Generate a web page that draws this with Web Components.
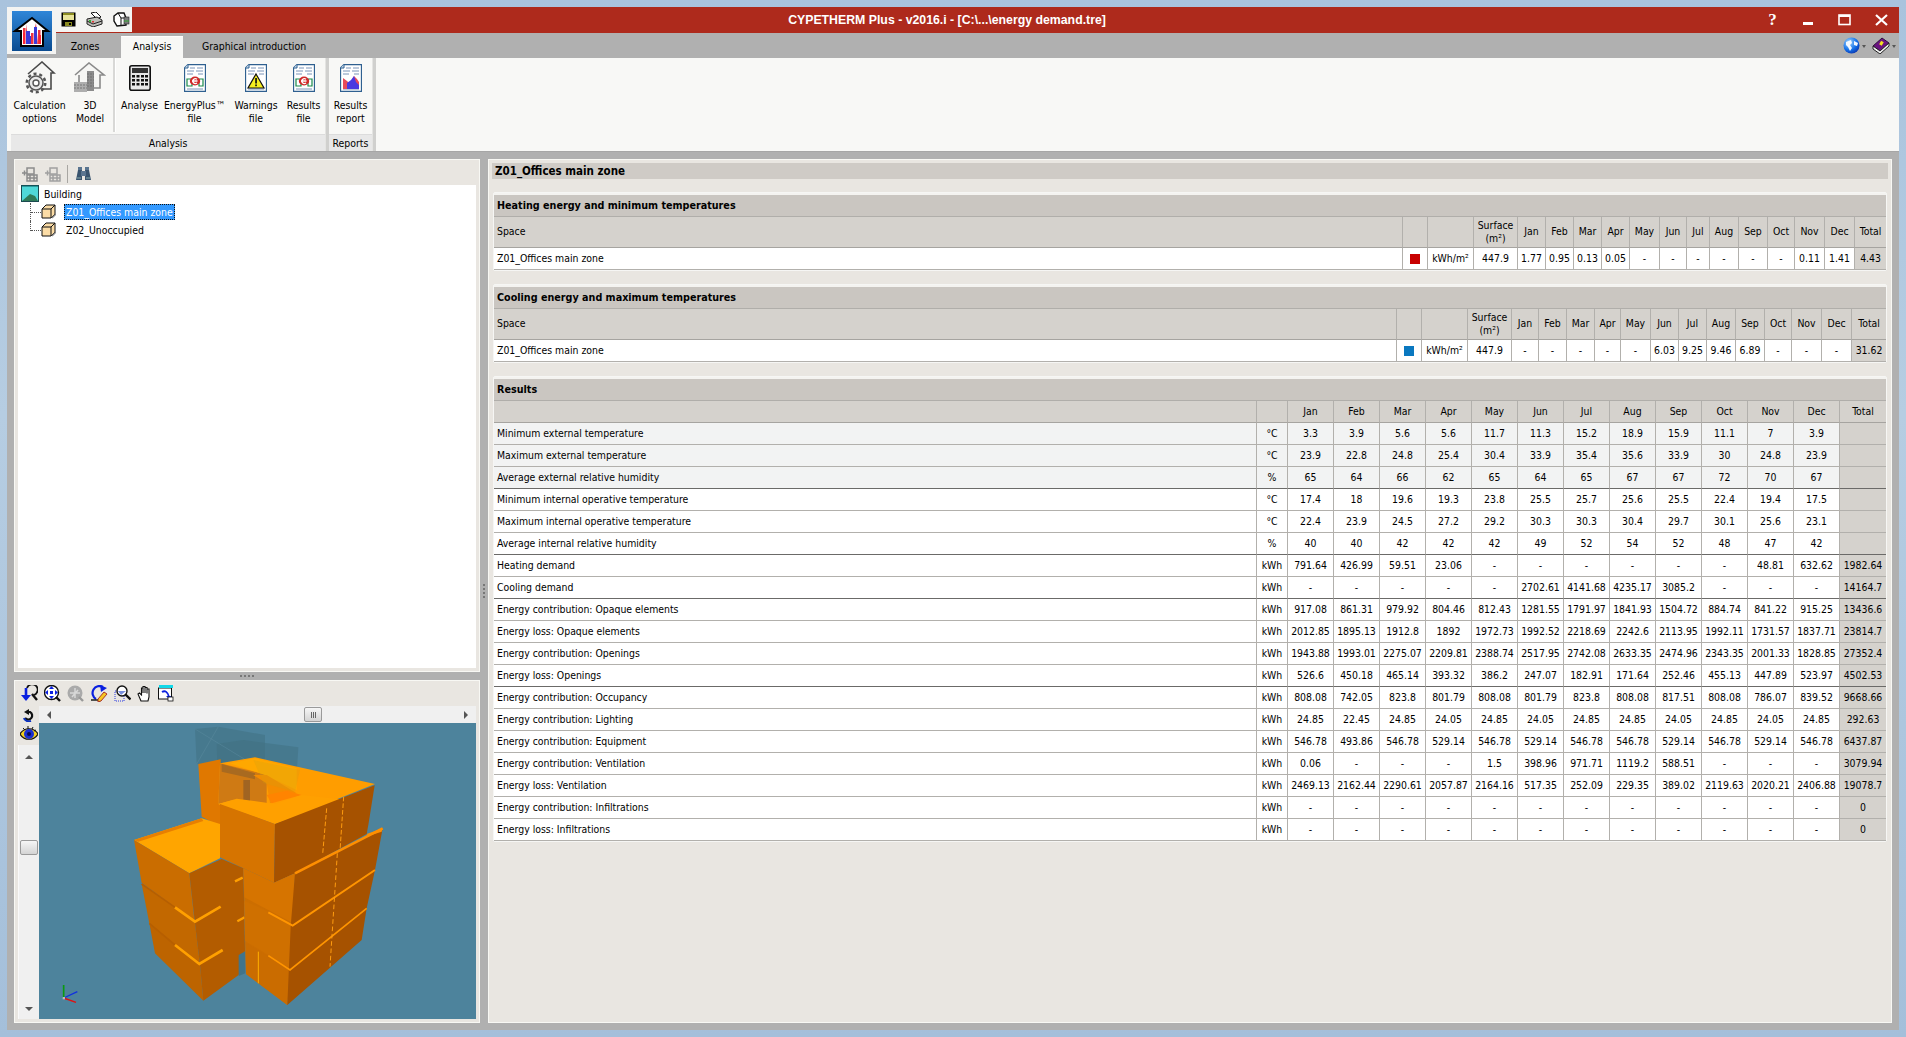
<!DOCTYPE html>
<html lang="en">
<head>
<meta charset="utf-8">
<title>CYPETHERM Plus</title>
<style>
  html, body { margin: 0; padding: 0; height: 100%; overflow: hidden; background: #a9c3dd; }
  body { font: 10.4px "DejaVu Sans Condensed", "Liberation Sans", Arial, sans-serif; color: #000; }
</style>
</head>
<body>
<cyp-app></cyp-app>

<script>
'use strict';

// ── icons ── every one is drawn at its real pixel size
const ICONS = {
  logo: [40, 40, `<defs><linearGradient id="lg" x1="0" y1="0" x2="0" y2="1"><stop offset="0" stop-color="#2f86d8"/><stop offset="1" stop-color="#0a4b90"/></linearGradient></defs>
    <rect width="40" height="40" fill="url(#lg)"/>
    <path d="M20 7 36 20H31V35H9V20H3Z" fill="#fff" stroke="#000" stroke-width="2"/>
    <path d="M11 17h2.5v16H11zM19 22h2.5v11H19zM26 19h2.5v14H26z" fill="#ee3340"/>
    <path d="M14 13 16 26 19 33H14ZM22 33V20L24 12 26 33Z" fill="#e83040" opacity=".9"/>
    <path d="M14 20h4v13h-4zM22 16h3v17h-3zM16 25h3v8h-3z" fill="#3a3ad8"/>
    <path d="M11 22h2v11h-2zM27 24h2v9h-2z" fill="#f23"/>`],
  save: [15, 15, `<rect x=".5" y=".5" width="14" height="14" fill="#000"/><rect x="2" y="1" width="11" height="7" fill="#e8e39a"/><rect x="2" y="1" width="11" height="2" fill="#8a8a20"/>
    <rect x="4" y="10" width="7" height="4" fill="#8a8a20"/><rect x="8" y="11" width="2" height="2" fill="#000"/>`],
  print: [17, 15, `<path d="M5 1 10 0 15 5 11 7Z" fill="#fff" stroke="#111"/><path d="M1 7 11 5 16 8V12L7 15 1 12Z" fill="#bdbdb8" stroke="#222"/>
    <path d="M1 9 7 12 16 9" fill="none" stroke="#222"/><rect x="3" y="8" width="2" height="2" fill="#3a3"/><rect x="6" y="9" width="2" height="1.5" fill="#d33"/>`],
  setup: [17, 15, `<path d="M1 4 5 1 11 1 13 6 13 13 4 14 1 9Z" fill="#fff" stroke="#111" stroke-width="1.4"/><path d="M5 1 8 6V14M8 6 13 6" fill="none" stroke="#111"/>
    <rect x="11" y="5" width="5" height="7" fill="#7c7c7c" stroke="#222" stroke-width=".6"/><path d="M11 9h5" stroke="#3a3"/>`],
  globe: [17, 17, `<defs><radialGradient id="gb" cx=".35" cy=".3" r=".8"><stop offset="0" stop-color="#9fd4ff"/><stop offset=".6" stop-color="#1470e8"/><stop offset="1" stop-color="#0a2fa8"/></radialGradient></defs>
    <circle cx="8.5" cy="8.5" r="8" fill="url(#gb)"/><path d="M3 5 8 3 9 6 7 8 9 11 7 14 5 10 3 8ZM11 4 15 6 14 9 11 8Z" fill="#f4f8ff"/>`],
  book: [18, 17, `<path d="M1 9 10 1 17 6 8 14Z" fill="#6a1580" stroke="#301040"/><path d="M1 9V12L8 17 17 9V6L8 14Z" fill="#f4f4f4" stroke="#222"/>
    <rect x="8" y="4" width="3" height="4" fill="#f4e020" transform="rotate(30 9 6)"/>`],
  calcOpts: [33, 33, `<path d="M5 13 19 1 31 12H28V28H18" fill="#f6f6f4" stroke="#4a4a4a" stroke-width="1.6"/>
    <circle cx="13" cy="22" r="7" fill="#e8e8e8" stroke="#555" stroke-width="1.5"/><circle cx="13" cy="22" r="9.2" fill="none" stroke="#555" stroke-width="2.6" stroke-dasharray="3 2.8"/>
    <circle cx="13" cy="22" r="3" fill="#fff" stroke="#555" stroke-width="1.4"/>`],
  model3d: [32, 32, `<path d="M1 13 15 1 30 13H26V26H20M5 13V20" fill="#f6f6f4" stroke="#8a8a8a" stroke-width="1.6"/>
    <path d="M13 9h7v20H13z" fill="#8c8c8c"/><path d="M0 20h13v10H0z" fill="#aeaeae"/>
    <path d="M13 12h7M13 15h7M13 18h7M13 21h7M13 24h7M0 23h13M0 26h13" stroke="#6a6a6a" stroke-width=".8" stroke-dasharray="2 1"/>`],
  calc: [22, 26, `<rect x=".8" y=".8" width="20.4" height="24.4" rx="2" fill="#e8e8e8" stroke="#111" stroke-width="1.6"/><rect x="3" y="3" width="16" height="5" fill="#333"/>
    <g fill="#111"><rect x="3" y="10" width="3" height="2.5"/><rect x="7.5" y="10" width="3" height="2.5"/><rect x="12" y="10" width="3" height="2.5"/><rect x="16" y="10" width="3" height="2.5"/>
    <rect x="3" y="14" width="3" height="2.5"/><rect x="7.5" y="14" width="3" height="2.5"/><rect x="12" y="14" width="3" height="2.5"/><rect x="16" y="14" width="3" height="2.5"/>
    <rect x="3" y="18" width="3" height="2.5"/><rect x="7.5" y="18" width="3" height="2.5"/><rect x="12" y="18" width="3" height="2.5"/><rect x="16" y="18" width="3" height="2.5"/></g>`],
  docE: [22, 28, docShell() + `<path d="M3 15h5v7H3zM15 15h4v7h-4z" fill="none" stroke="#1a8a4a" stroke-width="1.2"/>
    <ellipse cx="11" cy="17" rx="5.2" ry="4.4" fill="#d02a2a"/><path d="M8 17h5.5M13 15.2A2.6 2.4 0 1 0 13 19" fill="none" stroke="#fff" stroke-width="1.3"/>`],
  docWarn: [22, 28, docShell() + `<path d="M11 10 19 24H3Z" fill="#f6ee20" stroke="#111" stroke-width="1.2"/><rect x="10.2" y="14" width="1.7" height="5.5" fill="#111"/><rect x="10.2" y="20.5" width="1.7" height="1.7" fill="#111"/>`],
  docReport: [22, 28, docShell() + `<path d="M3 14 7 17 10 20 14 12 17 15 19 18V25H3Z" fill="#e84a5a"/><path d="M7 25V19L11 16 14 12 16 18 19 21V25Z" fill="#4a3ae0"/>`],
  treeAdd: [17, 15, treeTool('#8c8c8c')],
  treeDel: [17, 15, treeTool('#a0a0a0')],
  binoc: [17, 14, `<path d="M1 13 3 3H7V13ZM10 13V3H14L16 13Z" fill="#39546e"/><rect x="6" y="4" width="5" height="5" fill="#5a7590"/><rect x="3" y="0" width="4" height="3" fill="#5a7590"/><rect x="10" y="0" width="4" height="3" fill="#5a7590"/><path d="M2 11h4M11 11h4" stroke="#8aa" />`],
  building: [18, 17, `<rect x=".5" y=".5" width="17" height="16" fill="#4fd8d8" stroke="#1a4a50"/><path d="M1 16 9 9 14 11 17 16Z" fill="#2f7a58"/><path d="M1 1h16" stroke="#0a5a60"/>`],
  zone: [15, 15, `<path d="M1 5 5 1H14V10L10 14H1Z" fill="#fbdca6" stroke="#111"/><path d="M1 5H10V14M10 5 14 1" fill="none" stroke="#111"/><path d="M11 14 15 10" stroke="#888" stroke-width="1.5"/>`],
  vRot: [17, 17, `<path d="M6 3A5.5 5.5 0 1 1 13 10" fill="none" stroke="#111" stroke-width="1.8"/><path d="M5 3V12" stroke="#0a20e0" stroke-width="2.6"/><path d="M0 10H10L5 16Z" fill="#0a20e0"/><path d="M11 9 16 15" stroke="#111" stroke-width="2.4"/>`],
  vFit: [17, 17, `<circle cx="7.5" cy="7.5" r="7" fill="#fff" stroke="#111" stroke-width="1.4"/><path d="M7.5 1 10 4H5ZM7.5 14 5 11H10ZM1 7.5 4 5V10ZM14 7.5 11 10V5Z" fill="#0a20e0"/><rect x="6" y="6" width="3" height="3" fill="#0a20e0"/><path d="M12 12 16 16" stroke="#111" stroke-width="2.4"/>`],
  vOff: [17, 17, `<circle cx="8" cy="8" r="7.5" fill="#aaaaaa"/><path d="M8 3V13M3 8H13M5 12 11 5" stroke="#d8d8d8" stroke-width="1.5" fill="none"/><path d="M12 12 16 16" stroke="#999" stroke-width="2.4"/>`],
  vRedraw: [18, 17, `<path d="M13 2A6.5 6.5 0 1 0 6 14" fill="none" stroke="#0a20e0" stroke-width="2.2"/><path d="M10 0 17 3 11 7Z" fill="#0a20e0"/><path d="M1 15H9" stroke="#111" stroke-width="1.4"/><path d="M8 14 14 7 17 9 11 16 8 17Z" fill="#f6c820" stroke="#a02020" stroke-width=".9"/>`],
  vZoom: [17, 17, `<path d="M1 6h9v10H1z" fill="none" stroke="#2a3ae0" stroke-dasharray="1 1"/><circle cx="8" cy="6" r="5" fill="#fff" stroke="#111" stroke-width="1.4"/><path d="M4 6h8L7 10Z" fill="#4060d0" opacity=".7"/><path d="M11.5 9.5 16.5 14.5" stroke="#111" stroke-width="2.4"/>`],
  vHand: [15, 17, `<path d="M4 16 1 9 2.5 8 4.5 10V3H6V8V1.5H8V8V2.5H10V8.5V4H12V12L11 16Z" fill="#fff" stroke="#111" stroke-width="1.1"/>`],
  vWin: [16, 17, `<rect x=".5" y="3" width="13" height="11" fill="#fff" stroke="#111"/><rect x="1" y="0" width="14" height="3" fill="#12d8e8"/><path d="M4 7C7 5 10 7 11 12" fill="none" stroke="#0a20e0" stroke-width="1.8"/><path d="M8 11h5l-1 4Z" fill="#0a20e0"/><rect x="10" y="12" width="5" height="4" fill="#fff" stroke="#111" stroke-width=".8"/>`],
  vUndo: [14, 13, `<path d="M6 3H8A4 4 0 1 1 3 9" fill="none" stroke="#111" stroke-width="2.2"/><path d="M2 3 7 0V6Z" fill="#111"/><path d="M2 9A5 4 0 0 0 9 12" fill="none" stroke="#0a30c0" stroke-width="2"/>`],
  vEye: [18, 16, `<path d="M0 8C4 1 14 1 18 8 14 15 4 15 0 8Z" fill="#f4d020" stroke="#111" stroke-width="1.2"/><ellipse cx="9" cy="8" rx="5" ry="5" fill="#1a30d0"/><circle cx="9" cy="8" r="2" fill="#0a0a50"/><path d="M3 2 5 4M8 0V3M13 1 12 3M16 4 14 5" stroke="#111"/>`],
};

function docShell() {
  return `<path d="M4 .5H21.5V27.5H.5V4Z" fill="#fff" stroke="#2f6090" stroke-width="1.3"/><path d="M.5 4H4V.5" fill="#cfe0f0" stroke="#2f6090"/>
    <path d="M6 4h5M13 4h6M3 7h7M12 7h7M3 10h6M14 10h5M3 25h16" stroke="#7a94b8" stroke-width="1"/>`;
}
function treeTool(c) {
  return `<g fill="none" stroke="${c}" stroke-width="1.5"><path d="M1 6H6M3.5 3.5V8.5"/><rect x="6" y="1" width="7" height="6"/><rect x="6" y="8" width="10" height="6"/><path d="M9 8v6M13 8v6M6 11h10"/></g>`;
}

class CypIcon extends HTMLElement {
  connectedCallback() {
    const [w, h, body] = ICONS[this.getAttribute('name')];
    this.attachShadow({ mode: 'open' }).innerHTML =
      `<style>:host{display:inline-flex;flex:none;line-height:0}</style>
       <svg xmlns="http://www.w3.org/2000/svg" width="${w}" height="${h}" viewBox="0 0 ${w} ${h}">${body}</svg>`;
  }
}
customElements.define('cyp-icon', CypIcon);

// ── title bar with the application button lying over the tabs ──
class CypTitlebar extends HTMLElement {
  constructor() {
    super();
    this.attachShadow({ mode: 'open' }).innerHTML = `
      <style>
        :host { display: flex; position: relative; height: 26px; background: #ae2a1c; color: #fff; align-items: center; }
        .logo { position: absolute; left: 0; top: 0; width: 49px; height: 47px; background: #f4f4f2; box-sizing: border-box; padding: 4px 5px; z-index: 2; }
        .quick { margin-left: 49px; width: 76px; height: 25px; align-self: flex-start; background: #f4f4f2; display: flex; align-items: center; padding-left: 5px; gap: 10px; box-sizing: border-box; }
        .title { flex: 1; text-align: center; font: bold 12.3px "Liberation Sans", Arial, sans-serif; padding-left: 6px; }
        .ctl { display: flex; align-items: center; height: 26px; margin-right: -1px; }
        .ctl span { width: 37px; display: flex; justify-content: center; align-items: center; }
        .ctl .q { font: bold 17px "Liberation Serif", serif; width: 33px; }
      </style>
      <div class="logo"><cyp-icon name="logo"></cyp-icon></div>
      <div class="quick"><cyp-icon name="save"></cyp-icon><cyp-icon name="print"></cyp-icon><cyp-icon name="setup"></cyp-icon></div>
      <div class="title"><slot></slot></div>
      <div class="ctl">
        <span class="q">?</span>
        <span><svg width="12" height="12"><rect x="1" y="8" width="10" height="3" fill="#fff"/></svg></span>
        <span><svg width="13" height="12"><rect x="1" y="1" width="11" height="9.5" fill="none" stroke="#fff" stroke-width="1.6"/><rect x="1" y="1" width="11" height="2" fill="#fff"/></svg></span>
        <span><svg width="13" height="12"><path d="M1 1 12 11M12 1 1 11" stroke="#fff" stroke-width="2.2"/></svg></span>
      </div>`;
  }
}
customElements.define('cyp-titlebar', CypTitlebar);

class CypTabs extends HTMLElement {
  constructor() {
    super();
    this.attachShadow({ mode: 'open' }).innerHTML = `
      <style>
        :host { display: flex; height: 25px; background: #b0b0b0; padding-left: 42px; align-items: flex-end; }
        .tab { height: 22px; display: flex; align-items: center; justify-content: center; padding-bottom: 2px; box-sizing: border-box; }
        .on { background: #f8f8f6; box-shadow: inset 0 1px 0 #fff; }
        .end { margin-left: auto; display: flex; gap: 6px; align-self: center; padding-right: 3px; }
        .drop { position: relative; padding-right: 6px; display: inline-flex; align-items: center; }
        .drop::after { content: ""; border: 2.5px solid transparent; border-top: 3px solid #555; position: absolute; right: 0; top: 8px; }
      </style>
      <div class="tab" style="width:72px">Zones</div>
      <div class="tab on" style="width:62px">Analysis</div>
      <div class="tab" style="width:142px">Graphical introduction</div>
      <div class="end">
        <span class="drop"><cyp-icon name="globe"></cyp-icon></span>
        <span class="drop"><cyp-icon name="book"></cyp-icon></span>
      </div>`;
  }
}
customElements.define('cyp-tabs', CypTabs);

class CypRibbonButton extends HTMLElement {
  constructor() {
    super();
    this.attachShadow({ mode: 'open' }).innerHTML = `
      <style>
        :host { display: flex; flex-direction: column; align-items: center; padding-top: 3px; text-align: center; line-height: 13px; box-sizing: border-box; white-space: nowrap; flex: none; }
        .ico { height: 36px; margin-bottom: 2px; display: flex; align-items: center; justify-content: center; }
      </style>
      <div class="ico"><span id="i"></span></div>
      <div><slot></slot></div>`;
  }
  connectedCallback() {
    this.style.width = this.getAttribute('w') + 'px';
    this.shadowRoot.getElementById('i').innerHTML = `<cyp-icon name="${this.getAttribute('icon')}"></cyp-icon>`;
  }
}
customElements.define('cyp-ribbon-button', CypRibbonButton);

class CypRibbonGroup extends HTMLElement {
  constructor() {
    super();
    this.attachShadow({ mode: 'open' }).innerHTML = `
      <style>
        :host { display: flex; flex-direction: column; height: 93px; flex: none; }
        .btns { display: flex; height: 76px; flex: none; }
        .lab { height: 17px; background: #e8e8e8; border-top: 1px solid #dcdcdc; box-sizing: border-box; text-align: center; line-height: 16px; }
      </style>
      <div class="btns"><slot></slot></div>
      <div class="lab" id="l"></div>`;
  }
  connectedCallback() {
    this.shadowRoot.getElementById('l').textContent = this.getAttribute('label');
  }
}
customElements.define('cyp-ribbon-group', CypRibbonGroup);

class CypRibbon extends HTMLElement {
  constructor() {
    super();
    this.attachShadow({ mode: 'open' }).innerHTML = `
      <style>
        :host { display: flex; height: 94px; background: #f8f8f6; padding-left: 4px; box-sizing: border-box; border-bottom: 1px solid #a6a6a6; }
      </style>
      <slot></slot>`;
  }
}
customElements.define('cyp-ribbon', CypRibbon);

class CypTreeItem extends HTMLElement {
  constructor() {
    super();
    this.attachShadow({ mode: 'open' }).innerHTML = `
      <style>
        :host { display: flex; align-items: center; height: 18px; white-space: nowrap; }
        :host([root]) { padding-left: 3px; }
        .elbow { width: 11px; margin-left: 12px; height: 100%; box-sizing: border-box; border-left: 1px dotted #555; flex: none; }
        .elbow::after { content: ""; display: block; height: 9px; border-bottom: 1px dotted #555; }
        :host([last]) .elbow { height: 10px; align-self: flex-start; }
        .txt { padding: 1px 2px; margin-left: 8px; line-height: 14px; }
        :host([root]) .txt { margin-left: 3px; }
        :host([selected]) .txt { background: #3399ff; color: #fff; outline: 1px dotted #111; outline-offset: -1px; padding: 1px 2px; }
      </style>
      <span id="e"></span><span id="i"></span><span class="txt"><slot></slot></span>`;
  }
  connectedCallback() {
    if (!this.hasAttribute('root')) this.shadowRoot.getElementById('e').className = 'elbow';
    this.shadowRoot.getElementById('e').style.display = this.hasAttribute('root') ? 'none' : 'block';
    this.shadowRoot.getElementById('i').innerHTML = `<cyp-icon name="${this.getAttribute('icon')}"></cyp-icon>`;
  }
}
customElements.define('cyp-tree-item', CypTreeItem);

class CypTreePanel extends HTMLElement {
  constructor() {
    super();
    this.attachShadow({ mode: 'open' }).innerHTML = `
      <style>
        :host { display: flex; flex-direction: column; background: #e9e6e1; border: 1px solid #f8f8f4; padding: 3px; box-sizing: border-box; height: 513px; }
        .bar { height: 22px; flex: none; display: flex; align-items: center; padding-left: 3px; gap: 6px; }
        .sep { width: 1px; height: 18px; background: #a8a6a2; margin: 0 1px 0 0; }
        .tree { flex: 1; background: #fff; }
      </style>
      <div class="bar">
        <cyp-icon name="treeAdd"></cyp-icon><cyp-icon name="treeDel"></cyp-icon><span class="sep"></span><cyp-icon name="binoc"></cyp-icon>
      </div>
      <div class="tree"><slot></slot></div>`;
  }
}
customElements.define('cyp-tree-panel', CypTreePanel);

// ── 3D viewer: the model is drawn in one svg, with the reference's proportions ──
const MODEL = `
<svg xmlns="http://www.w3.org/2000/svg" width="437" height="296" viewBox="117 189 1311 888" style="display:block">
  <rect x="117" y="189" width="1311" height="888" fill="#4d839c"/>
  <!-- glass boxes at the back -->
  <path d="M585 207 655 200 795 225V335L590 312Z" fill="#3f6f80" opacity=".5"/>
  <path d="M650 252 730 240 895 262 887 395 790 440 655 420Z" fill="#3f6f80" opacity=".5"/>
  <path d="M585 207 795 335M655 200 590 312" stroke="#5b8a9e" stroke-width="1.5"/>
  <!-- back tower -->
  <path d="M595 312 662 298 662 500 605 470Z" fill="#e07800"/>
  <path d="M660 310 765 292 1125 372 825 492 655 432Z" fill="#ff9d00"/>
  <path d="M660 310 765 335 800 345 800 440 700 420 655 432Z" fill="#cf7a14"/>
  <path d="M730 360H750V430H730Z" fill="#a06422"/>
  <path d="M665 312 765 340V358L665 335Z" fill="#a86a20"/>
  <path d="M690 310 765 295 890 325 890 390 795 345Z" fill="#ffa800"/>
  <path d="M760 345 800 345 890 400 810 430 800 370Z" fill="#f58c00"/>
  <path d="M815 430 905 405 860 392 800 405Z" fill="#ff8400"/>
  <path d="M760 300 900 330 885 395 790 370Z" fill="#caa012" opacity=".25"/>
  <!-- upper block -->
  <path d="M655 432 710 416 825 432 905 405 1040 420 825 492Z" fill="#ffa000"/>
  <path d="M660 432 825 492 822 668 660 592Z" fill="#d67400"/>
  <path d="M825 492 1124 376 1105 495 1100 522 885 640 822 668Z" fill="#a65200"/>
  <path d="M980 445 968 582M1031 410 1020 572" stroke="#ff9c10" stroke-width="3" stroke-dasharray="14 6"/>
  <!-- left low block -->
  <path d="M402 540 605 475 660 492V595L568 640Z" fill="#ffa500"/>
  <path d="M402 540 605 475 610 483 415 545Z" fill="#e87f00"/>
  <path d="M402 540 568 640 584 790 525 742 425 668Z" fill="#ca6d00"/>
  <path d="M425 672 525 742 585 790 600 915 525 855 448 790Z" fill="#c26800"/>
  <path d="M448 790 525 855 600 915 610 1022 465 880Z" fill="#bd6400"/>
  <path d="M568 640 665 597 730 625 735 872 716 945 610 1022 600 915 585 790Z" fill="#b35c00"/>
  <path d="M425 672 525 742M448 790 525 855" stroke="#b75f00" stroke-width="5"/>
  <path d="M525 742 585 785 662 740M525 855 598 912 668 870" fill="none" stroke="#ffa000" stroke-width="8"/>
  <path d="M705 664 728 653M712 784 734 772" stroke="#ff9f00" stroke-width="7"/>
  <path d="M716 885 736 874V940L716 948Z" fill="#41748a"/>
  <!-- big right block -->
  <path d="M730 625 822 668 885 640 872 800 862 1035 738 942Z" fill="#cc6e00"/>
  <path d="M730 625 822 668 885 640 880 790 805 750 733 712Z" fill="#d67400"/>
  <path d="M733 722 805 755 876 797 872 928 805 885 735 842Z" fill="#cf7000"/>
  <path d="M736 846 805 888 870 932 862 1035 738 942Z" fill="#ca6c00"/>
  <path d="M885 640 1148 505 1125 630 1100 745 1085 840 862 1035 872 800Z" fill="#a65200"/>
  <path d="M1100 522 1148 505 1145 515 1105 528Z" fill="#ff8f00"/>
  <path d="M885 640 1148 505" stroke="#ff8f00" stroke-width="8"/>
  <path d="M805 757 878 797 1125 630" fill="none" stroke="#ff9500" stroke-width="6"/>
  <path d="M805 887 870 930 1100 745" fill="none" stroke="#ff9500" stroke-width="5"/>
  <path d="M1012 580 990 920" stroke="#ff9c10" stroke-width="3" stroke-dasharray="14 8"/>
  <path d="M775 875V970" stroke="#ffb000" stroke-width="3"/>
  <!-- axes -->
  <path d="M191 1014V975" stroke="#0a9a10" stroke-width="5"/><path d="M191 1014 232 995" stroke="#1030e0" stroke-width="4"/><path d="M191 1014 228 1027" stroke="#e01010" stroke-width="4"/>
  <rect x="188" y="1011" width="7" height="7" fill="#bbb"/>
</svg>`;

class CypViewer extends HTMLElement {
  constructor() {
    super();
    this.attachShadow({ mode: 'open' }).innerHTML = `
      <style>
        :host { display: grid; grid-template-columns: 21px 437px; grid-template-rows: 25px 17px 296px; background: #e9e6e1; border: 1px solid #f8f8f4; padding: 0 3px 3px; box-sizing: border-box; height: 343px; }
        .bar { grid-column: 1 / 3; display: flex; align-items: center; padding: 0 0 0 3px; gap: 6px; }
        .side { grid-row: 2 / 4; display: flex; flex-direction: column; }
        .tools { height: 39px; flex: none; display: flex; flex-direction: column; align-items: center; gap: 4px; padding-top: 3px; box-sizing: border-box; }
        .vs { flex: 1; background: #f0f0f0; border-left: 1px solid #fafafa; display: flex; flex-direction: column; align-items: center; }
        .hs { background: #f0f0f0; display: flex; align-items: center; }
        .t { width: 0; height: 0; border: 4px solid transparent; flex: none; }
        .up { border-bottom: 4px solid #555; margin-top: 6px; }
        .dn { border-top: 4px solid #555; margin-bottom: 4px; }
        .lf { border-right: 4px solid #555; margin-left: 4px; }
        .rt { border-left: 4px solid #555; margin-right: 4px; }
        .thumb { background: linear-gradient(#f6f6f6, #d4d4d4); border: 1px solid #9a9a9a; border-radius: 2px; box-sizing: border-box; flex: none; }
        .hthumb { width: 18px; height: 15px; display: flex; align-items: center; justify-content: center; gap: 1px; }
        .hthumb i { width: 1px; height: 6px; background: #666; }
        .vthumb { width: 18px; height: 15px; }
        .grow { flex: 1; }
      </style>
      <div class="bar">
        <cyp-icon name="vRot"></cyp-icon><cyp-icon name="vFit"></cyp-icon><cyp-icon name="vOff"></cyp-icon><cyp-icon name="vRedraw"></cyp-icon><cyp-icon name="vZoom"></cyp-icon><cyp-icon name="vHand"></cyp-icon><cyp-icon name="vWin"></cyp-icon>
      </div>
      <div class="side">
        <div class="tools"><cyp-icon name="vUndo"></cyp-icon><cyp-icon name="vEye"></cyp-icon></div>
        <div class="vs">
          <span class="t up"></span><span style="height:81px"></span>
          <div class="thumb vthumb"></div>
          <span class="grow"></span><span class="t dn"></span>
        </div>
      </div>
      <div class="hs">
        <span class="t lf"></span><span style="width:253px"></span>
        <div class="thumb hthumb"><i></i><i></i><i></i></div>
        <span class="grow"></span><span class="t rt"></span>
      </div>
      <div>${MODEL}</div>`;
  }
}
customElements.define('cyp-viewer', CypViewer);

// ── grid of values: columns by boundary, rows by data ──
class CypTable extends HTMLElement {
  constructor() {
    super();
    this.attachShadow({ mode: 'open' }).innerHTML = `
      <style>
        :host { display: block; }
        table { border-collapse: separate; border-spacing: 0; table-layout: fixed; width: 1392px; }
        td { padding: 0 0 1px; height: 22px; box-sizing: border-box; text-align: center; white-space: nowrap; overflow: hidden; border-right: 1px solid #b2b0ac; border-bottom: 1px solid #b2b0ac; background: #fff; line-height: 13px; }
        td:first-child { text-align: left; padding-left: 3px; }
        td:last-child { border-right: 0; background: #d5d2cd; }
        tr.grey td:not(:last-child) { background: #f2f3f3; }
        tr.head td { background: #d5d2cd; border-bottom-color: #a6a4a0; }
        tr.title td { background: #cac6c1; font-weight: bold; font-size: 10.7px; border-right: 0; border-bottom-color: #b0aeaa; padding-left: 3px; text-align: left; }
        tr.brk td { border-bottom-color: #6b6a68; }
        .sw { display: inline-block; width: 10px; height: 10px; vertical-align: middle; }
      </style>
      <table></table>`;
  }
  set data({ title, bounds, head, headH, rows }) {
    const cols = bounds.slice(1).map((b, i) => `<col style="width:${b - bounds[i]}px">`).join('');
    const cell = v => v && v.swatch ? `<span class="sw" style="background:${v.swatch}"></span>` : v;
    let html = `<colgroup>${cols}</colgroup>`;
    html += `<tr class="title"><td colspan="${bounds.length - 1}">${title}</td></tr>`;
    html += `<tr class="head"><td style="height:${headH}px">${head.join('</td><td>')}</td></tr>`;
    for (const r of rows) {
      html += `<tr class="${r.cls || ''}">${r.cells.map(v => `<td>${cell(v)}</td>`).join('')}</tr>`;
    }
    this.shadowRoot.querySelector('table').innerHTML = html;
  }
}
customElements.define('cyp-table', CypTable);

class CypCard extends HTMLElement {
  constructor() {
    super();
    this.attachShadow({ mode: 'open' }).innerHTML = `
      <style>
        :host { display: block; border: 1px solid #f6f6f4; border-radius: 2px; padding-top: 2px; margin: 0 1px 13px; background: #f4f3f0; }
      </style>
      <slot></slot>`;
  }
}
customElements.define('cyp-card', CypCard);

const MONTHS = ['Jan', 'Feb', 'Mar', 'Apr', 'May', 'Jun', 'Jul', 'Aug', 'Sep', 'Oct', 'Nov', 'Dec'];
const line = s => s.split(' ');
const RESULTS = [
  ['Minimum external temperature', '°C', '3.3 3.9 5.6 5.6 11.7 11.3 15.2 18.9 15.9 11.1 7 3.9', '', 'grey'],
  ['Maximum external temperature', '°C', '23.9 22.8 24.8 25.4 30.4 33.9 35.4 35.6 33.9 30 24.8 23.9', '', 'grey'],
  ['Average external relative humidity', '%', '65 64 66 62 65 64 65 67 67 72 70 67', '', 'grey brk'],
  ['Minimum internal operative temperature', '°C', '17.4 18 19.6 19.3 23.8 25.5 25.7 25.6 25.5 22.4 19.4 17.5', ''],
  ['Maximum internal operative temperature', '°C', '22.4 23.9 24.5 27.2 29.2 30.3 30.3 30.4 29.7 30.1 25.6 23.1', ''],
  ['Average internal relative humidity', '%', '40 40 42 42 42 49 52 54 52 48 47 42', '', 'brk'],
  ['Heating demand', 'kWh', '791.64 426.99 59.51 23.06 - - - - - - 48.81 632.62', '1982.64'],
  ['Cooling demand', 'kWh', '- - - - - 2702.61 4141.68 4235.17 3085.2 - - -', '14164.7', 'brk'],
  ['Energy contribution: Opaque elements', 'kWh', '917.08 861.31 979.92 804.46 812.43 1281.55 1791.97 1841.93 1504.72 884.74 841.22 915.25', '13436.6'],
  ['Energy loss: Opaque elements', 'kWh', '2012.85 1895.13 1912.8 1892 1972.73 1992.52 2218.69 2242.6 2113.95 1992.11 1731.57 1837.71', '23814.7'],
  ['Energy contribution: Openings', 'kWh', '1943.88 1993.01 2275.07 2209.81 2388.74 2517.95 2742.08 2633.35 2474.96 2343.35 2001.33 1828.85', '27352.4'],
  ['Energy loss: Openings', 'kWh', '526.6 450.18 465.14 393.32 386.2 247.07 182.91 171.64 252.46 455.13 447.89 523.97', '4502.53', 'brk'],
  ['Energy contribution: Occupancy', 'kWh', '808.08 742.05 823.8 801.79 808.08 801.79 823.8 808.08 817.51 808.08 786.07 839.52', '9668.66'],
  ['Energy contribution: Lighting', 'kWh', '24.85 22.45 24.85 24.05 24.85 24.05 24.85 24.85 24.05 24.85 24.05 24.85', '292.63'],
  ['Energy contribution: Equipment', 'kWh', '546.78 493.86 546.78 529.14 546.78 529.14 546.78 546.78 529.14 546.78 529.14 546.78', '6437.87'],
  ['Energy contribution: Ventilation', 'kWh', '0.06 - - - 1.5 398.96 971.71 1119.2 588.51 - - -', '3079.94'],
  ['Energy loss: Ventilation', 'kWh', '2469.13 2162.44 2290.61 2057.87 2164.16 517.35 252.09 229.35 389.02 2119.63 2020.21 2406.88', '19078.7'],
  ['Energy contribution: Infiltrations', 'kWh', '- - - - - - - - - - - -', '0'],
  ['Energy loss: Infiltrations', 'kWh', '- - - - - - - - - - - -', '0'],
];

class CypResults extends HTMLElement {
  constructor() {
    super();
    this.attachShadow({ mode: 'open' }).innerHTML = `
      <style>
        :host { display: block; background: #e9e6e1; border: 1px solid #f8f8f4; padding: 3px; box-sizing: border-box; height: 864px; }
        .zone { height: 16px; background: #cfcbc6; font-weight: bold; font-size: 11.5px; line-height: 16px; padding-left: 3px; margin-bottom: 13px; }
      </style>
      <div class="zone"><slot></slot></div>
      <cyp-card><cyp-table id="heat"></cyp-table></cyp-card>
      <cyp-card><cyp-table id="cool"></cyp-table></cyp-card>
      <cyp-card><cyp-table id="res"></cyp-table></cyp-card>`;
    const $ = id => this.shadowRoot.getElementById(id);
    const spaceHead = ['Space', '', '', 'Surface<br>(m²)', ...MONTHS, 'Total'];
    $('heat').data = {
      title: 'Heating energy and minimum temperatures', headH: 31, head: spaceHead,
      bounds: [494, 1403, 1428, 1474, 1518, 1546, 1574, 1602, 1630, 1660, 1687, 1710, 1739, 1768, 1795, 1825, 1855, 1886],
      rows: [{ cells: ['Z01_Offices main zone', { swatch: '#c80000' }, 'kWh/m²', '447.9', ...line('1.77 0.95 0.13 0.05 - - - - - - 0.11 1.41'), '4.43'] }],
    };
    $('cool').data = {
      title: 'Cooling energy and maximum temperatures', headH: 31, head: spaceHead,
      bounds: [494, 1397, 1422, 1468, 1512, 1539, 1567, 1595, 1621, 1651, 1679, 1707, 1736, 1765, 1792, 1822, 1852, 1886],
      rows: [{ cells: ['Z01_Offices main zone', { swatch: '#0a78c0' }, 'kWh/m²', '447.9', ...line('- - - - - 6.03 9.25 9.46 6.89 - - -'), '31.62'] }],
    };
    $('res').data = {
      title: 'Results', headH: 22, head: ['', '', ...MONTHS, 'Total'],
      bounds: [494, 1257, 1288, 1334, 1380, 1426, 1472, 1518, 1564, 1610, 1656, 1702, 1748, 1794, 1840, 1886],
      rows: RESULTS.map(([n, u, vals, tot, cls]) => ({ cells: [n, u, ...line(vals), tot], cls })),
    };
  }
}
customElements.define('cyp-results', CypResults);

class CypApp extends HTMLElement {
  constructor() {
    super();
    this.attachShadow({ mode: 'open' }).innerHTML = `
      <style>
        :host { display: flex; flex-direction: column; box-sizing: border-box; width: 1906px; height: 1037px; padding: 7px; background: linear-gradient(#a9c3dd, #b6cde2 40%, #a4bfda); overflow: hidden; }
        .body { flex: 1; background: #b0b0b0; display: grid; grid-template-columns: 466px 8px 1404px; padding: 7px; box-sizing: border-box; min-height: 0; }
        .left { display: grid; grid-template-rows: 513px 8px 343px; }
        .gripH { display: flex; justify-content: center; align-items: center; gap: 2px; }
        .gripH i { width: 2px; height: 2px; background: #777; }
        .gripV { display: flex; flex-direction: column; justify-content: center; align-items: center; gap: 2px; height: 100%; }
        .gripV i { width: 2px; height: 2px; background: #777; }
        .r1 { width: 2px; margin: 0 1px; background: #d8d8d6; flex: none; align-self: stretch; height: 74px; box-shadow: 1px 0 0 #fff; }
        .gs { width: 4px; flex: none; background: #d0d0ce; box-shadow: inset 1px 0 0 #e4e4e2; }
      </style>
      <cyp-titlebar>CYPETHERM Plus - v2016.i - [C:\\...\\energy demand.tre]</cyp-titlebar>
      <cyp-tabs></cyp-tabs>
      <cyp-ribbon>
        <cyp-ribbon-group label="Analysis">
          <cyp-ribbon-button w="57" icon="calcOpts">Calculation<br>options</cyp-ribbon-button>
          <cyp-ribbon-button w="44" icon="model3d">3D<br>Model</cyp-ribbon-button>
          <span class="r1"></span>
          <cyp-ribbon-button w="47" icon="calc">Analyse</cyp-ribbon-button>
          <cyp-ribbon-button w="63" icon="docE">EnergyPlus™<br>file</cyp-ribbon-button>
          <cyp-ribbon-button w="60" icon="docWarn">Warnings<br>file</cyp-ribbon-button>
          <cyp-ribbon-button w="35" icon="docE">Results<br>file</cyp-ribbon-button>
          <span style="width:4px;flex:none"></span>
        </cyp-ribbon-group>
        <span class="gs"></span>
        <cyp-ribbon-group label="Reports">
          <cyp-ribbon-button w="43" icon="docReport">Results<br>report</cyp-ribbon-button>
        </cyp-ribbon-group>
        <span class="gs"></span>
      </cyp-ribbon>
      <div class="body">
        <div class="left">
          <cyp-tree-panel>
            <cyp-tree-item root icon="building">Building</cyp-tree-item>
            <cyp-tree-item icon="zone" selected>Z01_Offices main zone</cyp-tree-item>
            <cyp-tree-item icon="zone" last>Z02_Unoccupied</cyp-tree-item>
          </cyp-tree-panel>
          <div class="gripH"><i></i><i></i><i></i><i></i></div>
          <cyp-viewer></cyp-viewer>
        </div>
        <div class="gripV"><i></i><i></i><i></i><i></i></div>
        <cyp-results>Z01_Offices main zone</cyp-results>
      </div>`;
  }
}
customElements.define('cyp-app', CypApp);
</script>
</body>
</html>
